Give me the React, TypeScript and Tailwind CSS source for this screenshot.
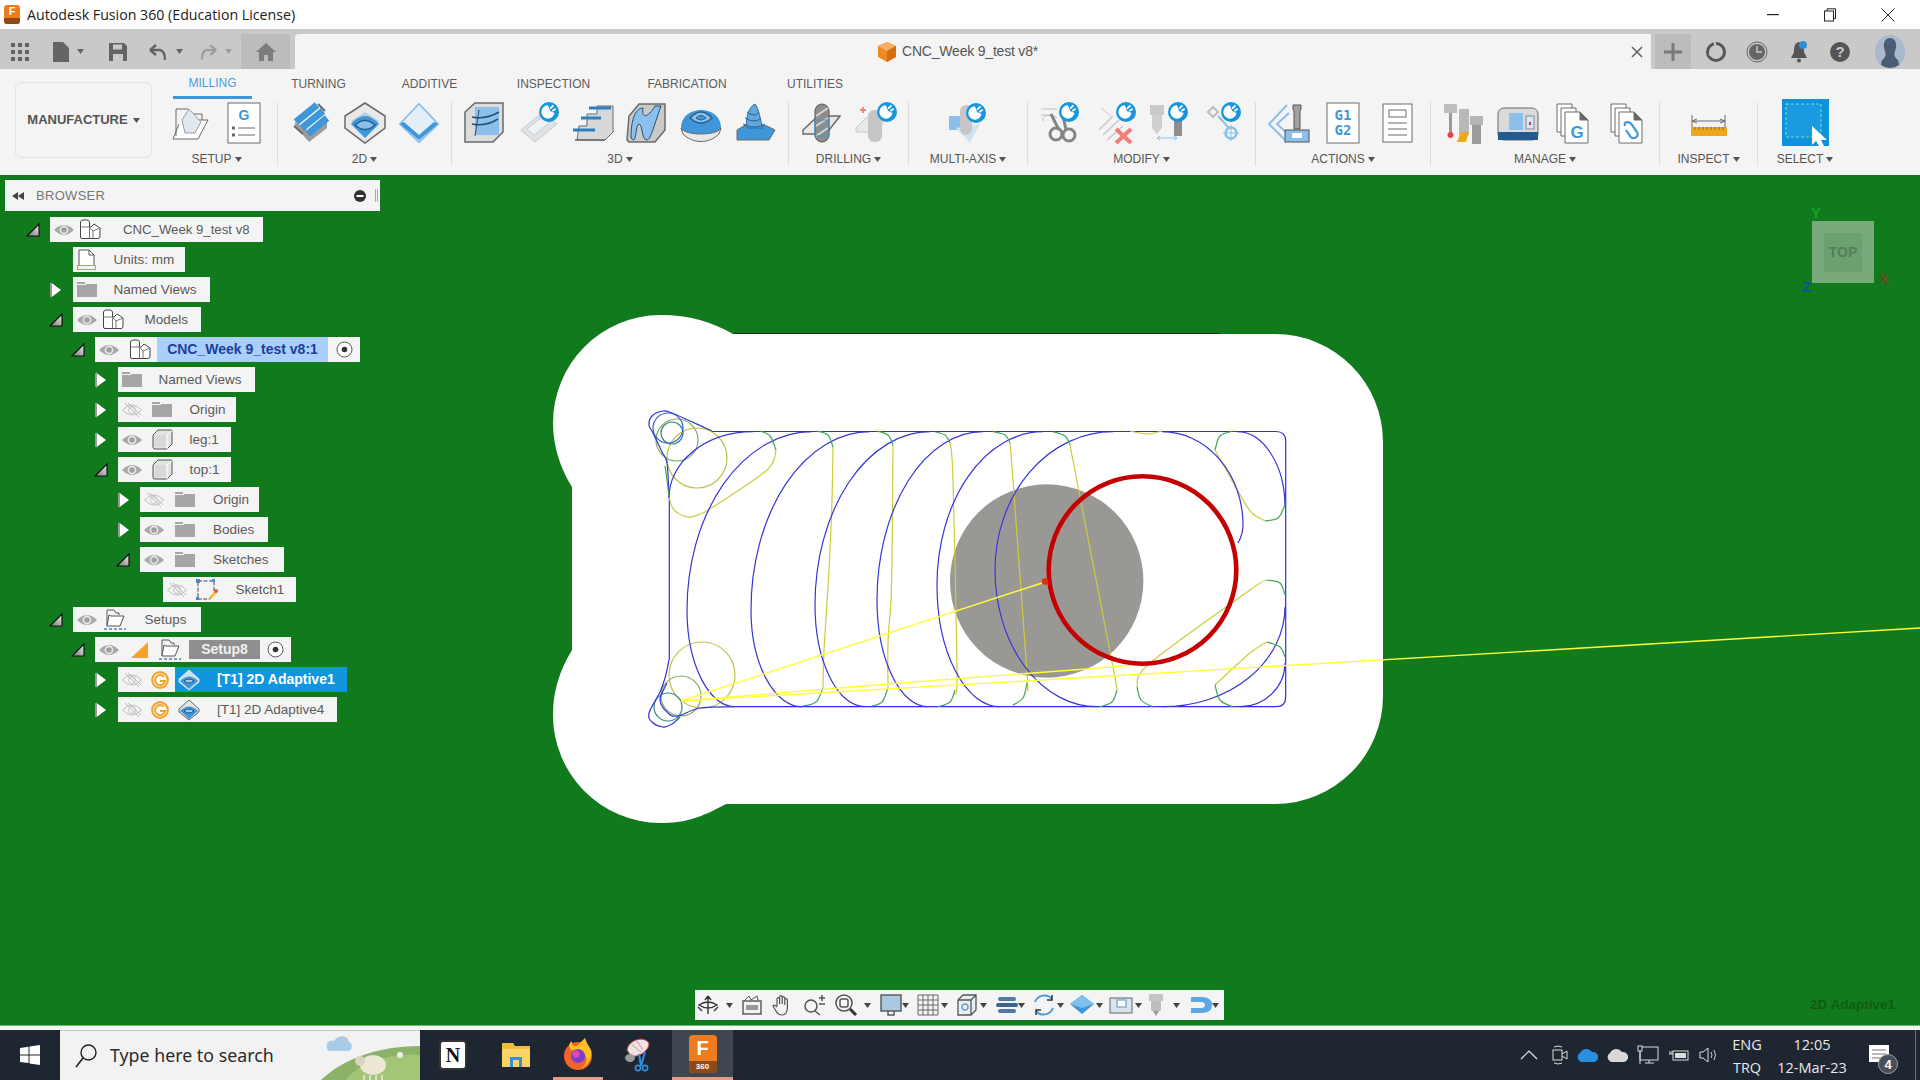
import React from "react";

const B = "#3f97d9", L = "#8cc0ea", G = "#6a6a6a";

function smooth(p: number[][]) {
  let d = `M${p[0][0]} ${p[0][1]}`;
  for (let i = 0; i < p.length - 1; i++) {
    const a = p[Math.max(i - 1, 0)], b = p[i], c = p[i + 1], e = p[Math.min(i + 2, p.length - 1)];
    d += ` C${b[0] + (c[0] - a[0]) / 6} ${b[1] + (c[1] - a[1]) / 6} ${c[0] - (e[0] - b[0]) / 6} ${c[1] - (e[1] - b[1]) / 6} ${c[0]} ${c[1]}`;
  }
  return d;
}

const T0 = 431.7, B0 = 706.7;
const sweeps: number[][] = [
  [812, 687, 735, 610],
  [870, 751, 802, 610],
  [930, 815, 865, 605],
  [983, 877, 928, 600],
  [1043, 937, 1000, 585],
  [1113, 995, 1097, 570],
];
const blueArcs: string[] = [
  ...sweeps.map(([t, l, b, y]) => `M${t} ${T0} A${t - l} ${y - T0} 0 0 0 ${l} ${y} A${b - l} ${B0 - y} 0 0 0 ${b} ${B0}`),
  `M753 ${T0} A84 66 0 0 0 669 497.7`,
  `M1162 ${T0} A81 93 0 0 1 1243 525 Q1243 534 1238 543`,
  `M1285 607 A122 100 0 0 1 1163 ${B0}`,
  `M1237 ${T0} A48 75 0 0 1 1285 507`,
  `M1285 663 A45 44 0 0 1 1240 ${B0}`,
];
const blue: number[][][] = [
  [[712, 431], [690, 421], [672, 413], [663, 411], [652, 416], [649, 425], [653, 433], [662, 452], [667, 463], [669, 497]],
  [[667, 683], [660, 700], [668, 713], [678, 716], [700, 708], [735, 706.7]],
  [[669, 660], [665, 678], [660, 692], [649, 713], [652, 722], [663, 727], [672, 724], [680, 717]],
];
const green: number[][][] = [
  [[760, 431], [770, 436], [776, 450]],
  [[817, 431], [828, 435], [833, 447]],
  [[877, 431], [888, 435], [893, 445]],
  [[935, 431.7], [945, 435], [950, 443]],
  [[993, 431.7], [1005, 435], [1010, 443]],
  [[1053, 431.7], [1065, 436], [1070, 445]],
  [[1233, 431], [1220, 436], [1215, 450]],
  [[1265, 521], [1278, 518], [1285, 505]],
  [[803, 706], [816, 702], [823, 688]],
  [[872, 706], [882, 702], [888, 688]],
  [[938, 706.7], [950, 702], [955, 690]],
  [[1013, 705], [1023, 698], [1027, 683]],
  [[1100, 706.7], [1112, 702], [1117, 690]],
  [[1137, 687], [1141, 700], [1153, 707]],
  [[1267, 580], [1280, 583], [1285, 595]],
  [[1215, 685], [1220, 700], [1233, 707]],
  [[1285, 657], [1280, 647], [1267, 642]],
  [[669, 497], [667, 480], [665, 466]],
];
const olive: number[][][] = [
  [[669, 497], [674, 510], [688, 517], [700, 514], [713, 507], [767, 470], [776, 450]],
  [[833, 447], [832, 500], [829, 570], [824, 650], [823, 688]],
  [[893, 445], [892, 560], [891, 600], [888, 643], [888, 688]],
  [[950, 443], [953, 480], [957, 667], [955, 695]],
  [[1010, 443], [1013, 480], [1027, 673], [1027, 683]],
  [[1070, 445], [1080, 497], [1113, 667], [1117, 690]],
  [[1130, 431], [1147, 434], [1162, 431]],
  [[1215, 450], [1243, 500], [1252, 513], [1265, 521]],
  [[1137, 687], [1150, 663], [1250, 590], [1267, 580]],
  [[1267, 642], [1250, 653], [1215, 685]],
];

function Drawing() {
  return (
    <svg width="1920" height="850" viewBox="0 175 1920 850" className="absolute inset-0">
      <path d="M733 334 L1275 334 A108 108 0 0 1 1383 442 L1383 696 A108 108 0 0 1 1275 804 L726 804 C700 818 685 823 660 823 A108 108 0 0 1 553 715 C553 690 560 670 572 650 L572 487 C560 468 553 445 553 423 A108 108 0 0 1 660 315 C690 315 712 322 733 334 Z" fill="#fff" />
      <line x1="733" y1="333.5" x2="1220" y2="333.5" stroke="#1d2b1d" strokeWidth="1.2" />
      <circle cx="1046.7" cy="581" r="96.7" fill="#9a9895" />
      <g fill="none" strokeWidth="1.2">
        <circle cx="697" cy="458" r="30" stroke="#bfc24a" />
        <circle cx="677" cy="440" r="21" stroke="#7cae5a" />
        <circle cx="702" cy="675" r="33" stroke="#c2c24a" />
        <circle cx="681" cy="696" r="20" stroke="#80ae5a" />
        <circle cx="672" cy="433" r="11" stroke="#3a8a80" />
        <circle cx="668" cy="428" r="15" stroke="#3a5ec8" />
        <circle cx="668" cy="707" r="14" stroke="#3a8a80" />
        <path d="M712 431.5 H1276 Q1285.7 431.5 1285.7 441 V697 Q1285.7 706.7 1276 706.7 H735" stroke="#2e2ee6" />
        <line x1="669.3" y1="497" x2="669.3" y2="660" stroke="#2e2ee6" />
        {olive.map((p, i) => <path key={i} d={smooth(p)} stroke="#cccc3c" />)}
        {blueArcs.map((d, i) => <path key={i} d={d} stroke="#3535d8" />)}
        {blue.map((p, i) => <path key={i} d={smooth(p)} stroke="#3535d8" />)}
        {green.map((p, i) => <path key={i} d={smooth(p)} stroke="#46a45c" />)}
        <polyline points="681,701 1045,582" stroke="#ffff38" strokeWidth="1.4" />
        <polyline points="681,701 1127,675 1920,628" stroke="#ffff38" strokeWidth="1.4" />
        <polyline points="681,701 900,683 1100,668 1130,665" stroke="#ffff38" strokeWidth="1.4" />
      </g>
      <circle cx="1142.5" cy="570" r="93.8" fill="none" stroke="#c40000" strokeWidth="4.6" />
      <circle cx="1045" cy="581.5" r="3.2" fill="#ee2a00" />
    </svg>
  );
}

function Plug({ x = 28, y = 10, r = 9 }: { x?: number; y?: number; r?: number }) {
  return (
    <g transform={`translate(${x} ${y}) scale(${r / 9})`}>
      <circle r="9" fill="#1796de" />
      <path d="M-1 -6 A6 6 0 1 0 5 1 L1 -1 Z" fill="#fff" />
      <path d="M1 -3 L4 -6 M3 -1 L6 -3" stroke="#fff" strokeWidth="1.6" />
    </g>
  );
}

function R({ c }: { c: React.ReactNode }) {
  return <svg width="44" height="42" viewBox="0 0 44 42" fill="none">{c}</svg>;
}

const ic: Record<string, React.ReactNode> = {
  open: <R c={<g stroke={G} strokeWidth="1"><path d="M11 22 L5 37 H30 L40 18 H14" fill="#fff" /><path d="M8 34 V7 H20 L24 12 H34 V18" fill="none" /><path d="M14 18 L21 7 L33 20 L27 31 H17 Z" fill="#dfe8ef" stroke="#9b9b9b" /></g>} />,
  gdoc: <R c={<g><rect x="6" y="1" width="32" height="40" fill="#fff" stroke={G} /><text x="22" y="18" textAnchor="middle" fontSize="14" fontWeight="700" fill={B} fontFamily="Liberation Sans">G</text><path d="M16 26 H33 M16 33 H33" stroke={G} /><rect x="10" y="24.5" width="3" height="3" fill={G} /><rect x="10" y="31.5" width="3" height="3" fill={G} /></g>} />,
  d2a: <R c={<g><path d="M6 24 L20 40 L38 26 V20 L24 32 L6 20Z" fill="#9c9c9c" /><path d="M7 20 L28 3 M13 26 L34 9 M19 32 L38 16" stroke={B} strokeWidth="7" /><path d="M5 24 L14 32 M29 2 L36 9" stroke={G} strokeWidth="2" /></g>} />,
  d2b: <R c={<g><path d="M22 1 L42 14 V26 L22 41 L2 26 V14Z" fill="#e9e9e9" stroke={G} strokeWidth="1.5" /><path d="M22 10 L36 19 L22 36 L8 19Z" fill="#b9cfe0" /><path d="M8 22 Q22 6 36 22 L22 36Z" fill={B} /><path d="M12 23 Q22 14 32 23 Q22 32 12 23Z" fill={L} stroke="#25608f" strokeWidth="1.5" /></g>} />,
  d2c: <R c={<g><path d="M22 2 L41 22 L22 40 L3 22Z" fill="#fff" stroke={L} strokeWidth="2" /><path d="M22 3 L38 20 L22 33 L6 20Z" fill="#e4eef6" /><path d="M7 20 L22 33 L37 20 L41 22 L22 38 L3 22Z" fill={B} /></g>} />,
  t3a: <R c={<g><path d="M2 10 L12 1 H40 V30 L30 40 H2Z" fill="#dcdcdc" stroke={G} strokeWidth="1.5" /><rect x="12" y="5" width="24" height="28" fill={L} /><path d="M9 15 Q22 18 36 10 M9 22 Q22 25 35 17" stroke="#244f78" strokeWidth="1.6" /><path d="M16 8 L12 34" stroke="#244f78" strokeWidth="1" /></g>} />,
  t3b: <R c={<g><path d="M4 28 L26 10 L40 22 L18 40Z" fill="#dfe2e5" stroke="#c8c8c8" /><path d="M10 27 L25 15 L32 21 L17 33Z" fill="#eef3f7" stroke="#c6d0d8" /><Plug x={32} y={10} r={10} /></g>} />,
  t3c: <R c={<g><path d="M6 38 H34 L42 30 V4 H26 V12 H16 V24 H8Z" fill="#d8d8d8" stroke={G} /><path d="M18 6 H40 M10 16 H30 M2 28 H24" stroke="#2c7fc0" strokeWidth="3" /><path d="M4 38 H34" stroke={G} strokeWidth="1.5" /></g>} />,
  t3d: <R c={<g><path d="M2 38 L4 14 L14 2 H40 V28 L30 40 H4Z" fill="#c9c9c9" stroke={G} strokeWidth="1.5" /><path d="M6 36 C6 10 14 6 18 6 C16 20 26 12 30 4 H36 C30 20 26 38 22 38 C16 38 18 22 14 22 C10 24 12 38 8 38Z" fill={L} stroke="#21507a" strokeWidth="1" /></g>} />,
  t3e: <R c={<g><path d="M2 26 C2 2 42 2 42 26 C42 38 2 38 2 26Z" fill={B} /><path d="M2 26 C6 34 38 34 42 26 L40 32 C30 42 14 42 4 32Z" fill="#e8e8e8" stroke={G} /><path d="M11 16 Q22 4 33 16 Q22 26 11 16Z" fill={L} stroke="#25608f" strokeWidth="1.5" /><path d="M17 16 Q22 11 27 16 Q22 20 17 16Z" fill="#3f97d9" stroke="#25608f" /></g>} />,
  t3f: <R c={<g><path d="M4 28 L14 22 H24 L34 24 L42 28 L36 38 H4Z" fill={B} stroke={G} /><path d="M14 26 C12 14 17 4 22 2 C26 6 27 18 30 26 H14Z" fill="#5fa7de" stroke="#2b6c9e" /><path d="M14 10 Q22 16 26 10 M12 16 Q22 22 28 16 M10 22 Q22 28 32 22" stroke="#27628f" /></g>} />,
  dr1: <R c={<g><path d="M3 28 L18 14 H40 L26 32 H3Z" fill="#e7e7e7" stroke={G} strokeWidth="1.5" /><rect x="15" y="2" width="14" height="38" rx="7" fill="#8d8d8d" stroke="#555" /><path d="M16 14 L28 6 M16 24 L28 16 M16 34 L28 26" stroke="#d4d4d4" strokeWidth="2" /><rect x="15" y="18" width="14" height="16" fill="none" stroke={B} /></g>} />,
  dr2: <R c={<g><path d="M6 8 H12 M9 5 V11" stroke="#e58a80" strokeWidth="2" /><path d="M2 26 L12 16 H32 L24 30 H2Z" fill="#e9e9e9" stroke="#c9c9c9" /><rect x="14" y="8" width="14" height="32" rx="6" fill="#c6c6c6" /><Plug x={33} y={10} r={10} /></g>} />,
  ma: <R c={<g><rect x="3" y="14" width="16" height="14" fill={L} /><path d="M10 26 L34 22 L24 41 Z" fill="#cfe2f2" /><rect x="14" y="3" width="12" height="30" rx="6" fill="#c6c6c6" /><Plug x={30} y={11} r={10} /></g>} />,
  sc: <R c={<g><path d="M2 7 H18 M2 13 H14 M4 19 C2 12 14 12 18 16" stroke="#bdbdbd" /><circle cx="17" cy="32" r="6" fill="none" stroke="#858585" strokeWidth="3" /><circle cx="30" cy="33" r="6" fill="none" stroke="#858585" strokeWidth="3" /><path d="M20 28 L12 12 M27 28 L24 14" stroke="#858585" strokeWidth="3" /><Plug x={30} y={10} r={10} /></g>} />,
  dl: <R c={<g><path d="M6 28 L20 14 M10 33 L26 18 M14 38 L30 24" stroke="#c9c9c9" strokeWidth="1.5" /><path d="M8 6 L18 14" stroke="#c9c9c9" /><path d="M23 27 L38 41 M38 27 L23 41" stroke="#ee7e78" strokeWidth="4" /><Plug x={33} y={10} r={10} /></g>} />,
  mv: <R c={<g><rect x="3" y="3" width="14" height="10" fill="#c9c9c9" /><path d="M5 13 H15 V26 L10 32 L5 26Z" fill="#cfcfcf" /><path d="M10 36 H30 M10 36 L13 34 M10 36 L13 38 M30 36 L27 34 M30 36 L27 38" stroke={L} /><rect x="27" y="18" width="8" height="16" fill="#8e8e8e" /><Plug x={31} y={10} r={10} /></g>} />,
  nd: <R c={<g><path d="M12 5 L17 10 L12 15 L7 10Z M12 5" stroke="#bcbcbc" strokeWidth="2" /><path d="M17 14 L28 26" stroke={L} strokeWidth="2" /><circle cx="30" cy="31" r="5.5" stroke={L} strokeWidth="2.5" /><path d="M30 23 V39 M22 31 H38" stroke={L} /><Plug x={30} y={10} r={10} /></g>} />,
  a1: <R c={<g><path d="M20 3 L2 22 L20 40 M22 11 L10 22 L22 33" stroke={L} strokeWidth="2" /><path d="M26 3 h8 v4 l-1 2 v18 h-6 v-18 l-1 -2Z" fill="#a0a0a0" stroke="#555" /><rect x="18" y="28" width="24" height="12" fill={L} stroke="#555" /><rect x="25" y="31" width="10" height="5" fill="#fff" /></g>} />,
  a2: <R c={<g><rect x="6" y="1" width="32" height="40" fill="#fff" stroke={G} /><text x="22" y="18" textAnchor="middle" fontSize="14" fontWeight="700" fill={B} fontFamily="DejaVu Sans Mono">G1</text><text x="22" y="33" textAnchor="middle" fontSize="14" fontWeight="700" fill={B} fontFamily="DejaVu Sans Mono">G2</text></g>} />,
  a3: <R c={<g><rect x="8" y="2" width="29" height="38" fill="#fff" stroke={G} /><rect x="14" y="8" width="17" height="7" stroke={G} /><path d="M13 21 H32 M13 27 H32 M13 33 H32" stroke={G} /></g>} />,
  m1: <R c={<g><rect x="2" y="2" width="13" height="9" fill="#bdbdbd" /><rect x="7" y="11" width="3" height="20" fill="#9a9a9a" /><circle cx="8.5" cy="33" r="3" fill="#e34747" /><rect x="17" y="7" width="10" height="26" fill="#b8b8b8" /><path d="M15 40 L19 30 H27 L24 40Z" fill="#eea820" /><rect x="28" y="14" width="13" height="9" fill="#b5b5b5" /><rect x="30" y="23" width="9" height="19" fill="#9b9b9b" /></g>} />,
  m2: <R c={<g><rect x="2" y="6" width="40" height="32" rx="6" fill="#dadada" stroke={G} /><rect x="2" y="30" width="40" height="8" fill="#255a8c" /><rect x="13" y="11" width="14" height="17" fill={L} /><rect x="30" y="14" width="8" height="13" fill="#d8e7f4" stroke="#888" /><rect x="33" y="20" width="2" height="3" fill="#c34" /></g>} />,
  m3: <R c={<g stroke={G} fill="#fff"><path d="M7 2 H22 V30 H7Z" /><path d="M11 6 H26 V34 H11Z" /><path d="M15 10 H30 L38 18 V41 H15Z" /><path d="M30 10 V18 H38" fill="#666" /><text x="27" y="36" textAnchor="middle" fontSize="17" fontWeight="700" fill={B} stroke="none" fontFamily="Liberation Sans">G</text></g>} />,
  m4: <R c={<g stroke={G} fill="#fff"><path d="M7 2 H22 V30 H7Z" /><path d="M11 6 H26 V34 H11Z" /><path d="M15 10 H30 L38 18 V41 H15Z" /><path d="M30 10 V18 H38" fill="#666" /><path d="M21 24 C19 19 26 19 28 23 L33 30 C36 36 28 38 26 34 L22 28" stroke={B} strokeWidth="2.2" fill="none" /></g>} />,
  ins: <R c={<g><path d="M5 13 V25 M38 13 V25 M5 19 H38 M5 19 L10 17 M5 19 L10 21 M38 19 L33 17 M38 19 L33 21" stroke={G} /><rect x="4" y="25" width="36" height="9" fill="#eea820" /><path d="M8 25 v3 M12 25 v3 M16 25 v3 M20 25 v3 M24 25 v3 M28 25 v3 M32 25 v3 M36 25 v3" stroke="#8a6a20" /></g>} />,
};

function Caret({ c = "#555" }: { c?: string }) {
  return <svg width="7" height="5" viewBox="0 0 7 5" className="shrink-0"><path d="M0 0 H7 L3.5 5Z" fill={c} /></svg>;
}

function Group({ w, label, items }: { w: string; label: string; items: string[] }) {
  return (
    <div className={`${w} h-[64px] mt-[2px] flex flex-col items-center border-r border-[#dedede]`}>
      <div className="flex h-[42px] justify-center">
        {items.map((k, i) => <div key={i} className="w-[54px] flex justify-center">{ic[k]}</div>)}
      </div>
      <div className="mt-[6px] h-[22px] flex items-center gap-[3px] text-[12px] text-[#565656] whitespace-nowrap">{label}<Caret /></div>
    </div>
  );
}

function Ribbon() {
  return (
    <div className="h-[106px] bg-[#f4f4f4] flex font-['Liberation_Sans',sans-serif]">
      <div className="w-[156px] pl-[15px] pt-[13px]">
        <div className="w-[137px] h-[76px] border border-[#e3e3e3] rounded-[6px] flex items-center justify-center gap-[5px] text-[13px] font-bold text-[#555]">MANUFACTURE<Caret /></div>
      </div>
      <div className="flex-1 flex flex-col">
        <div className="h-[31px] flex items-start text-[12px] text-[#5c5c5c] pl-[17px]">
          <div className="w-[79px] h-[30px] border-b-[3px] border-[#3f97d9] text-[#4a9fdc] flex items-center justify-center pt-[1px]">MILLING</div>
          <div className="w-[133px] h-[29px] flex items-center justify-center">TURNING</div>
          <div className="w-[89px] h-[29px] flex items-center justify-center">ADDITIVE</div>
          <div className="w-[159px] h-[29px] flex items-center justify-center">INSPECTION</div>
          <div className="w-[108px] h-[29px] flex items-center justify-center">FABRICATION</div>
          <div className="w-[148px] h-[29px] flex items-center justify-center">UTILITIES</div>
        </div>
        <div className="flex">
          <Group w="w-[122px]" label="SETUP" items={["open", "gdoc"]} />
          <Group w="w-[174px]" label="2D" items={["d2a", "d2b", "d2c"]} />
          <Group w="w-[337px]" label="3D" items={["t3a", "t3b", "t3c", "t3d", "t3e", "t3f"]} />
          <Group w="w-[120px]" label="DRILLING" items={["dr1", "dr2"]} />
          <Group w="w-[119px]" label="MULTI-AXIS" items={["ma"]} />
          <Group w="w-[228px]" label="MODIFY" items={["sc", "dl", "mv", "nd"]} />
          <Group w="w-[175px]" label="ACTIONS" items={["a1", "a2", "a3"]} />
          <Group w="w-[229px]" label="MANAGE" items={["m1", "m2", "m3", "m4"]} />
          <Group w="w-[98px]" label="INSPECT" items={["ins"]} />
          <div className="w-[94px] h-[64px] flex flex-col items-center">
            <div className="w-[47px] h-[47px] -mt-[1px] bg-[#0f92dc] flex items-center justify-center">
              <svg width="47" height="47" viewBox="0 0 47 47"><rect x="4" y="5" width="35" height="33" fill="#1a9ae0" stroke="#6fe0d8" strokeWidth="1" strokeDasharray="3 2" /><path d="M30 27 L45 41 L39 41 L42 47 L37 47 L34 42 L30 46Z" fill="#fff" /></svg>
            </div>
            <div className="mt-[4px] h-[22px] flex items-center gap-[3px] text-[12px] text-[#565656]">SELECT<Caret /></div>
          </div>
        </div>
      </div>
    </div>
  );
}

function TopBar() {
  const c = "#646464";
  return (
    <div className="h-[40px] bg-[#c9c9c9] flex">
      <div className="w-[295px] flex pt-[5px]">
        <div className="w-[241px] h-[35px] flex items-center">
          <svg width="18" height="18" viewBox="0 0 18 18" className="ml-[11px]"><path d="M0 0 h4 v4 h-4z M7 0 h4 v4 h-4z M14 0 h4 v4 h-4z M0 7 h4 v4 h-4z M7 7 h4 v4 h-4z M14 7 h4 v4 h-4z M0 14 h4 v4 h-4z M7 14 h4 v4 h-4z M14 14 h4 v4 h-4z" fill={c} /></svg>
          <svg width="18" height="22" viewBox="0 0 18 22" className="ml-[23px]"><path d="M1 1 H11 L17 7 V21 H1Z" fill={c} /></svg>
          <div className="ml-[7px]"><Caret c={c} /></div>
          <svg width="20" height="20" viewBox="0 0 20 20" className="ml-[24px]"><path d="M1 1 H16 L19 4 V19 H1Z" fill={c} /><rect x="5" y="2.5" width="9" height="5" fill="#c9c9c9" /><rect x="5" y="12" width="10" height="7" fill="#c9c9c9" /></svg>
          <svg width="18" height="18" viewBox="0 0 18 18" fill="none" className="ml-[21px]"><path d="M1 7 L7 2 M1 7 L7 12 M1 7 H11 Q16 8 16 17" stroke={c} strokeWidth="2.4" /></svg>
          <div className="ml-[9px]"><Caret c={c} /></div>
          <svg width="17" height="18" viewBox="0 0 18 18" fill="none" className="ml-[17px]"><path d="M17 7 L11 2 M17 7 L11 12 M17 7 H7 Q2 8 2 17" stroke="#9c9c9c" strokeWidth="2.4" /></svg>
          <div className="ml-[8px]"><Caret c="#9c9c9c" /></div>
        </div>
        <div className="w-[49px] h-[35px] bg-[#bcbcbc] rounded-t-[2px] flex items-center justify-center">
          <svg width="20" height="19" viewBox="0 0 20 19"><path d="M10 1 L20 10 H17 V19 H12 V13 H8 V19 H3 V10 H0Z" fill="#7c7c7c" /></svg>
        </div>
      </div>
      <div className="mt-[5px] w-[1356px] h-[35px] bg-[#f4f4f4] rounded-tl-[4px] flex items-center">
        <div className="w-[582px] shrink-0" />
        <svg width="20" height="22" viewBox="0 0 20 22"><path d="M10 1 L19 5 V16 L10 21 L1 16 V5Z" fill="#ee8a26" /><path d="M10 1 L19 5 L10 10 L1 5Z" fill="#f7ad62" /><path d="M10 10 L19 5 V16 L10 21Z" fill="#d66f12" /></svg>
        <div className="ml-[5px] w-[729px] shrink-0 text-[14px] text-[#555] font-['Liberation_Sans',sans-serif] tracking-[-0.2px]">CNC_Week 9_test v8*</div>
        <svg width="12" height="12" viewBox="0 0 12 12"><path d="M1 1 L11 11 M11 1 L1 11" stroke="#666" strokeWidth="1.6" /></svg>
      </div>
      <div className="flex-1 flex pt-[5px]">
        <div className="ml-[4px] w-[36px] h-[35px] bg-[#bcbcbc] flex items-center justify-center">
          <svg width="18" height="18" viewBox="0 0 18 18"><path d="M9 0 V18 M0 9 H18" stroke="#787878" strokeWidth="3" /></svg>
        </div>
        <div className="flex items-center h-[35px]">
          <svg width="22" height="22" viewBox="0 0 22 22" fill="none" className="ml-[14px]"><circle cx="11" cy="11" r="8.5" stroke="#555" strokeWidth="3" /><path d="M9 0 L12 9 L4 14" stroke="#c9c9c9" strokeWidth="2" /></svg>
          <svg width="22" height="22" viewBox="0 0 22 22" fill="none" className="ml-[19px]"><circle cx="11" cy="11" r="10" stroke="#666" /><circle cx="11" cy="11" r="8" fill="#666" /><path d="M11 5 V11 H16" stroke="#c9c9c9" strokeWidth="1.4" /></svg>
          <svg width="22" height="24" viewBox="0 0 22 24" className="ml-[20px]"><path d="M11 2 C6 3 6 8 6 12 L3 18 H19 L16 12 C16 8 16 3 11 2Z" fill="#555" /><circle cx="11" cy="20.5" r="2" fill="#555" /><circle cx="15" cy="5" r="4" fill="#2d8fd8" /></svg>
          <svg width="22" height="22" viewBox="0 0 22 22" className="ml-[19px]"><circle cx="11" cy="11" r="10" fill="#555" /><text x="11" y="16" textAnchor="middle" fontSize="15" fontWeight="700" fill="#c9c9c9" fontFamily="Liberation Sans">?</text></svg>
          <svg width="30" height="34" viewBox="0 0 30 34" className="ml-[24px]"><ellipse cx="15" cy="17" rx="15" ry="17" fill="#a9b9ce" /><path d="M15 3 C8 3 8 12 10 16 C11 20 11 22 7 25 L6 30 Q15 36 24 30 L23 25 C19 22 19 20 20 16 C22 12 22 3 15 3Z" fill="#4b5d75" /></svg>
        </div>
      </div>
    </div>
  );
}

const Eye = ({ off }: { off?: boolean }) => off ? (
  <svg width="20" height="14" viewBox="0 0 20 14" fill="none"><path d="M0.5 7 Q10 -3 19.5 7 Q10 17 0.5 7Z" stroke="#bdbdbd" /><circle cx="10" cy="7" r="3.5" stroke="#c6c6c6" /><path d="M3 0 L17 14 M6 0 L19 12" stroke="#b9b9b9" /></svg>
) : (
  <svg width="20" height="14" viewBox="0 0 20 14"><path d="M0 7 Q10 -3 20 7 Q10 17 0 7Z" fill="#a8a8a8" /><circle cx="10" cy="7" r="4.4" fill="#e9e9e9" /><circle cx="10" cy="7" r="2.8" fill="#a0a0a0" /></svg>
);
const Folder = () => <svg width="20" height="15" viewBox="0 0 20 15"><path d="M0 0 H8 V2 H20 V15 H0Z M1 3 H7" fill="#a6a6a6" /><path d="M0 2.5 H9" stroke="#f4f4f4" /></svg>;
const Comp = () => <svg width="21" height="21" viewBox="0 0 21 21" fill="none" stroke="#444"><path d="M2 19.5 Q0.5 19.5 0.5 18 V3 Q1 1 3 1 H7 Q9 1 9.5 3 V8 L11 8 L14 5 L20 9 V17 Q20 19.5 18 19.5Z" fill="#fff" /><path d="M9.5 8 L13 12 L20 9 M13 12 V19.5 M9.5 8 V19.5 M0.5 8 H9.5" stroke="#777" /></svg>;
const Body = () => <svg width="21" height="21" viewBox="0 0 21 21" fill="none"><path d="M6 1 H19 Q20 1 20 2 V15 L15 20 H3 Q1 20 1 18 V6Z" fill="#e3e3e3" stroke="#555" /><path d="M3 6 H15 V18 H3Z" fill="#d8d8d8" /><path d="M15 6 L20 2 M15 6 V20" stroke="#fff" /></svg>;
const Doc = () => <svg width="20" height="22" viewBox="0 0 20 22" fill="none"><path d="M2 17 V1 H12 L17 6 V17" stroke="#555" fill="#fff" /><path d="M12 1 V6 H17" stroke="#555" /><rect x="0.5" y="16.5" width="18" height="4" stroke="#e29a1a" fill="#f4f4f4" /></svg>;
const Radio = () => <svg width="17" height="17" viewBox="0 0 17 17"><circle cx="8.5" cy="8.5" r="7.5" fill="#fff" stroke="#555" /><circle cx="8.5" cy="8.5" r="2.8" fill="#333" /></svg>;
const Setup = () => <svg width="22" height="21" viewBox="0 0 22 21" fill="none" stroke="#555"><path d="M3 17 V1 H10 L12 4 H15 V6" /><path d="M5 6 L3 17 H16 L20 7 H7Z" fill="#fff" /><path d="M0 20 H22" stroke="#7ba0c0" strokeWidth="2" strokeDasharray="3 2" /></svg>;
const Orange = () => <svg width="18" height="18" viewBox="0 0 18 18" fill="none"><circle cx="9" cy="9" r="7.8" stroke="#f2a52b" strokeWidth="2.2" fill="#fff" /><path d="M13 6 A5 5 0 1 0 14 10 H9" stroke="#f2a52b" strokeWidth="2" /></svg>;
const Adaptive = ({ sel }: { sel?: boolean }) => <svg width="22" height="22" viewBox="0 0 22 22"><path d="M11 1 L21 10 V13 L11 21 L1 13 V10Z" fill={sel ? "#cfe0ea" : "#e4e4e4"} stroke={sel ? "#d8e6ef" : "#666"} /><path d="M2 12 Q11 3 20 12 L11 20Z" fill="#3f97d9" /><path d="M6 12 Q11 8 16 12 Q11 16 6 12Z" fill="#9cc8ea" stroke="#1f5580" /></svg>;
const Sketch = () => <svg width="22" height="22" viewBox="0 0 22 22" fill="none"><path d="M2 2 H18 V16 L14 20 H2Z" stroke="#444" strokeDasharray="4 1.5" /><rect x="0" y="0" width="4" height="4" fill="#4f86c6" /><rect x="16" y="0" width="3" height="3" fill="#4f86c6" /><rect x="0" y="18" width="3" height="3" fill="#4f86c6" /><path d="M14 19 L20 13" stroke="#f0c040" strokeWidth="3" /><circle cx="20" cy="12" r="2" fill="#e2584c" /></svg>;

const ExpDown = () => <svg width="14" height="14" viewBox="0 0 14 14"><defs><linearGradient id="ed" x1="0" y1="1" x2="1" y2="0"><stop offset="0" stopColor="#777" /><stop offset="1" stopColor="#eee" /></linearGradient></defs><path d="M1 13 L13 1 V13Z" fill="url(#ed)" stroke="#111" strokeWidth="1.2" /></svg>;
const ExpRight = () => <svg width="12" height="16" viewBox="0 0 12 16" className="ml-[1.5px]"><path d="M1 0.5 L11 8 L1 15.5Z" fill="#fff" /><path d="M1 1 V15" stroke="#999" strokeWidth="2" /></svg>;

function Row({ ml, w, exp, children }: { ml: string; w: string; exp?: "d" | "r"; children: React.ReactNode }) {
  return (
    <div className={`flex items-center h-[25px] ${ml}`}>
      <div className="w-[27px] -ml-[27px] h-[25px] flex items-center pl-[3px]">
        {exp === "d" && <ExpDown />}
        {exp === "r" && <ExpRight />}
      </div>
      <div className={`${w} h-[25px] bg-[#f4f4f4] flex items-center`}>{children}</div>
    </div>
  );
}
const Sl = ({ c, children }: { c: string; children?: React.ReactNode }) => <div className={`${c} h-[25px] flex items-center justify-center shrink-0`}>{children}</div>;
const T = ({ c, children }: { c: string; children: React.ReactNode }) => <div className={`${c} text-[13.5px] pt-[1px] text-[#5a5a5a] whitespace-nowrap`}>{children}</div>;

function Browser() {
  return (
    <div className="absolute left-[5px] top-[5px] w-[375px] font-['Liberation_Sans',sans-serif]">
      <div className="h-[31px] bg-[#f4f4f4] flex items-center">
        <svg width="12" height="8" viewBox="0 0 12 8" className="ml-[7px]"><path d="M6 0 V8 L0 4Z M12 0 V8 L6 4Z" fill="#444" /></svg>
        <div className="ml-[12px] text-[13px] text-[#777] tracking-[0.3px]">BROWSER</div>
        <svg width="12" height="12" viewBox="0 0 12 12" className="ml-[249px]"><circle cx="6" cy="6" r="6" fill="#333" /><rect x="2.5" y="5" width="7" height="2" fill="#fff" /></svg>
        <div className="ml-[9px] w-[3px] h-[13px] border-x border-[#aaa]" />
      </div>
      <div className="mt-[6px] -ml-[5px] flex flex-col gap-[5px] w-[400px]">
        <Row ml="ml-[50px]" w="w-[213px]" exp="d"><Sl c="w-[28px]"><Eye /></Sl><Sl c="w-[24px]"><Comp /></Sl><div className="ml-[21px] pt-[1px] text-[13.2px] text-[#5a5a5a] whitespace-nowrap">CNC_Week 9_test v8</div></Row>
        <Row ml="ml-[72.5px]" w="w-[112.5px]"><Sl c="w-[28px]"><Doc /></Sl><T c="ml-[13px]">Units: mm</T></Row>
        <Row ml="ml-[72.5px]" w="w-[137.5px]" exp="r"><Sl c="w-[28px]"><Folder /></Sl><T c="ml-[13px]">Named Views</T></Row>
        <Row ml="ml-[72.5px]" w="w-[128.5px]" exp="d"><Sl c="w-[28px]"><Eye /></Sl><Sl c="w-[25px]"><Comp /></Sl><T c="ml-[19px]">Models</T></Row>
        <Row ml="ml-[95px]" w="w-[265px]" exp="d"><Sl c="w-[28px]"><Eye /></Sl><Sl c="w-[34px]"><Comp /></Sl><div className="w-[171px] h-[25px] bg-[#a8d0fa] text-[14px] font-bold text-[#1c3f9c] flex items-center justify-center">CNC_Week 9_test v8:1</div><Sl c="w-[32px]"><Radio /></Sl></Row>
        <Row ml="ml-[117.5px]" w="w-[137.5px]" exp="r"><Sl c="w-[28px]"><Folder /></Sl><T c="ml-[13px]">Named Views</T></Row>
        <Row ml="ml-[117.5px]" w="w-[118.5px]" exp="r"><Sl c="w-[28px]"><Eye off /></Sl><Sl c="w-[33px]"><Folder /></Sl><T c="ml-[11px]">Origin</T></Row>
        <Row ml="ml-[117.5px]" w="w-[113.5px]" exp="r"><Sl c="w-[28px]"><Eye /></Sl><Sl c="w-[33px]"><Body /></Sl><T c="ml-[11px]">leg:1</T></Row>
        <Row ml="ml-[117.5px]" w="w-[113.5px]" exp="d"><Sl c="w-[28px]"><Eye /></Sl><Sl c="w-[33px]"><Body /></Sl><T c="ml-[11px]">top:1</T></Row>
        <Row ml="ml-[140px]" w="w-[118.5px]" exp="r"><Sl c="w-[28px]"><Eye off /></Sl><Sl c="w-[33px]"><Folder /></Sl><T c="ml-[12px]">Origin</T></Row>
        <Row ml="ml-[140px]" w="w-[128px]" exp="r"><Sl c="w-[28px]"><Eye /></Sl><Sl c="w-[33px]"><Folder /></Sl><T c="ml-[12px]">Bodies</T></Row>
        <Row ml="ml-[140px]" w="w-[144px]" exp="d"><Sl c="w-[28px]"><Eye /></Sl><Sl c="w-[33px]"><Folder /></Sl><T c="ml-[12px]">Sketches</T></Row>
        <Row ml="ml-[162.5px]" w="w-[133.5px]"><Sl c="w-[28px]"><Eye off /></Sl><Sl c="w-[33px]"><Sketch /></Sl><T c="ml-[12px]">Sketch1</T></Row>
        <Row ml="ml-[72.5px]" w="w-[128.5px]" exp="d"><Sl c="w-[28px]"><Eye /></Sl><Sl c="w-[29px]"><Setup /></Sl><T c="ml-[15px]">Setups</T></Row>
        <Row ml="ml-[95px]" w="w-[196px]" exp="d"><Sl c="w-[28px]"><Eye /></Sl><Sl c="w-[33px]"><svg width="17" height="16" viewBox="0 0 17 16"><path d="M0 16 L17 0 V16Z" fill="#f3a128" /></svg></Sl><Sl c="w-[28px]"><Setup /></Sl><div className="ml-[5px] w-[71px] h-[19px] bg-[#8f8f8f] text-[14px] font-bold text-[#f0f0f0] flex items-center justify-center">Setup8</div><Sl c="w-[31px]"><Radio /></Sl></Row>
        <Row ml="ml-[117.5px]" w="w-[229.5px]" exp="r"><Sl c="w-[28px]"><Eye off /></Sl><Sl c="w-[29.5px]"><Orange /></Sl><div className="flex-1 h-[25px] bg-[#0f96de] flex items-center"><Sl c="w-[28px]"><Adaptive sel /></Sl><div className="ml-[14px] text-[14px] font-bold text-white whitespace-nowrap">[T1] 2D Adaptive1</div></div></Row>
        <Row ml="ml-[117.5px]" w="w-[219.5px]" exp="r"><Sl c="w-[28px]"><Eye off /></Sl><Sl c="w-[29.5px]"><Orange /></Sl><Sl c="w-[28px]"><Adaptive /></Sl><T c="ml-[14px]">[T1] 2D Adaptive4</T></Row>
      </div>
    </div>
  );
}

function ViewCube() {
  return (
    <div className="absolute left-[1800px] top-[30px] w-[92px] h-[92px] font-['Liberation_Sans',sans-serif]">
      <div className="absolute left-[12px] top-[16px] w-[62px] h-[62px] bg-[#77a97a] flex items-center justify-center">
        <div className="w-[38px] h-[39px] bg-[#6ba070] flex items-center justify-center text-[14px] font-bold text-[#527f58]">TOP</div>
      </div>
      <div className="absolute left-[11px] top-[-3px] text-[15px] font-bold text-[#17a32a]">Y</div>
      <div className="absolute left-[79px] top-[63px] text-[15px] font-bold text-[#6e4a22]">X</div>
      <div className="absolute left-[2px] top-[71px] text-[15px] font-bold text-[#13509c]">Z</div>
    </div>
  );
}

const S = ({ children }: { children: React.ReactNode }) => <svg width="24" height="24" viewBox="0 0 24 24" fill="none">{children}</svg>;

function NavBar() {
  const g = "#555";
  const items: { w: string; m: string; n: React.ReactNode; caret?: boolean }[] = [
    { w: "w-[43px]", m: "ml-[6px]", caret: true, n: <S><path d="M12 3 V21 M3 12 Q12 6 21 12 Q12 18 3 12Z M12 3 L9 7 M12 3 L15 7 M2 14 L6 18 M22 14 L18 18" stroke="#333" strokeWidth="1.4" /></S> },
    { w: "w-[31px]", m: "", n: <S><rect x="4" y="8" width="18" height="13" stroke={g} strokeWidth="1.4" /><rect x="7" y="12" width="12" height="5" fill="#999" /><path d="M5 8 L10 3 L12 7 L18 3 L19 7" stroke={g} /></S> },
    { w: "w-[32px]", m: "", n: <S><path d="M7 13 V6 a1.3 1.3 0 0 1 2.6 0 V11 V4 a1.3 1.3 0 0 1 2.6 0 V11 V5 a1.3 1.3 0 0 1 2.6 0 V12 V7 a1.3 1.3 0 0 1 2.6 0 V15 Q17 22 12 22 Q8 22 6 18 L3 13 Q4 11 7 14" stroke={g} strokeWidth="1.2" /></S> },
    { w: "w-[32px]", m: "", n: <S><circle cx="9" cy="13" r="6" stroke={g} strokeWidth="1.5" /><path d="M13 18 L18 22 M17 5 H23 M20 2 V8 M17 11 H23" stroke={g} strokeWidth="1.5" /></S> },
    { w: "w-[45px]", m: "ml-[6px]", caret: true, n: <S><circle cx="10" cy="10" r="8" stroke={g} strokeWidth="1.5" /><rect x="6" y="6" width="8" height="8" rx="2" stroke={g} strokeWidth="1.5" /><path d="M16 16 L22 22" stroke="#333" strokeWidth="3" /></S> },
    { w: "w-[37px]", m: "-ml-[1px]", caret: true, n: <S><rect x="2" y="2" width="20" height="16" fill="#a9c8e2" stroke={g} strokeWidth="1.4" /><path d="M9 18 V22 H15 V18" stroke={g} strokeWidth="1.4" /></S> },
    { w: "w-[39px]", m: "ml-[1px]", caret: true, n: <S><path d="M2 2 H22 V22 H2Z M7 2 V22 M12 2 V22 M17 2 V22 M2 7 H22 M2 12 H22 M2 17 H22" stroke="#666" strokeWidth="1" /></S> },
    { w: "w-[40px]", m: "ml-[1px]", caret: true, n: <S><path d="M3 7 L8 2 H21 V17 L16 22 H3Z M3 7 H16 V22 M16 7 L21 2" stroke={g} strokeWidth="1.3" fill="#e8eef3" /><circle cx="10" cy="14" r="3" stroke="#6f9dc2" strokeWidth="1.5" /></S> },
    { w: "w-[37px]", m: "-ml-[1px]", caret: true, n: <S><rect x="3" y="4" width="18" height="4" rx="2" fill="#4d7ba5" /><rect x="1" y="10" width="22" height="4" rx="2" fill="#3e6488" /><rect x="3" y="16" width="18" height="4" rx="2" fill="#4d7ba5" /></S> },
    { w: "w-[38px]", m: "ml-[1px]", caret: true, n: <S><path d="M20 6 A10 10 0 0 0 3 9 M4 18 A10 10 0 0 0 21 15" stroke="#4f9ad8" strokeWidth="2" /><path d="M20 2 V7 H15 M4 22 V17 H9" stroke="#333" strokeWidth="1.5" /></S> },
    { w: "w-[39px]", m: "ml-[2px]", caret: true, n: <S><path d="M12 2 L24 11 L12 21 L0 11Z" fill="#3f97d9" /><path d="M12 2 L24 11 L12 15 L0 11Z" fill="#7fc0ee" /></S> },
    { w: "w-[35px]", m: "ml-[2px]", caret: true, n: <S><rect x="1" y="5" width="22" height="15" fill="#dbe4eb" stroke="#666" /><rect x="8" y="7" width="9" height="7" fill="#fff" stroke="#5b90bc" /></S> },
    { w: "w-[45px]", m: "ml-[5px]", caret: true, n: <S><rect x="5" y="1" width="14" height="7" fill="#c4c4c4" /><rect x="7" y="8" width="10" height="10" fill="#bdbdbd" /><path d="M9 18 L15 18 L12 23Z" fill="#999" /></S> },
    { w: "w-[35px]", m: "-ml-[1px]", caret: true, n: <S><path d="M2 4 H12 Q23 4 23 12 Q23 20 12 20 H2 V15 H12 Q16 15 16 12 Q16 9 12 9 H2Z" fill="#58a8e4" /></S> },
  ];
  return (
    <div className="absolute left-[695px] top-[815px] w-[529px] h-[30px] bg-[#f4f4f4] flex items-center pl-[1px]">
      {items.map((it, i) => (
        <div key={i} className={`${it.w} flex items-center shrink-0`}>
          {it.n}
          {it.caret && <div className={it.m}><Caret c="#444" /></div>}
        </div>
      ))}
    </div>
  );
}

function Taskbar() {
  return (
    <div className="h-[50px] bg-[#1e2632] flex font-['Open_Sans',sans-serif] text-[#e8e8e8]">
      <div className="w-[60px] flex items-center justify-center">
        <svg width="20" height="20" viewBox="0 0 20 20"><path d="M0 3 L8.5 1.8 V9.4 H0Z M9.5 1.6 L20 0 V9.4 H9.5Z M0 10.4 H8.5 V18 L0 16.9Z M9.5 10.4 H20 V20 L9.5 18.4Z" fill="#fff" /></svg>
      </div>
      <div className="w-[360px] bg-[#f2f2f2] border-t border-[#c9c3d6] relative flex items-center overflow-hidden">
        <svg width="24" height="26" viewBox="0 0 24 26" fill="none" className="ml-[14px]"><circle cx="14.5" cy="9.5" r="7.5" stroke="#222" strokeWidth="1.4" /><path d="M9 15 L2 24" stroke="#222" strokeWidth="1.6" /></svg>
        <div className="ml-[12px] text-[17.8px] text-[#2a2a2a] font-['Noto_Sans',sans-serif]">Type here to search</div>
        <svg width="100" height="50" viewBox="0 0 100 50" className="absolute right-0 top-0">
          <path d="M8 20 C4 12 10 8 14 10 C18 3 28 4 29 11 C33 11 33 20 28 20Z" fill="#a8cce6" />
          <path d="M0 50 C20 30 55 15 100 15 V50Z" fill="#8cb26a" />
          <path d="M25 50 C40 30 70 22 100 24 V50Z" fill="#a3c676" />
          <ellipse cx="53" cy="34" rx="13" ry="10" fill="#ece8d4" />
          <path d="M44 44 V50 M50 44 V50 M56 44 V50 M62 44 V50" stroke="#e0dcc8" strokeWidth="2" />
          <circle cx="40" cy="30" r="5" fill="#d8d4c0" />
          <circle cx="80" cy="24" r="3" fill="#eee" />
        </svg>
      </div>
      <div className="flex">
        <div className="w-[66px] flex items-center justify-center">
          <div className="w-[28px] h-[30px] bg-white border-2 border-[#333] rounded-[4px] flex items-center justify-center text-[#111] font-bold text-[20px] font-['Liberation_Serif',serif]">N</div>
        </div>
        <div className="w-[60px] flex items-center justify-center">
          <svg width="28" height="28" viewBox="0 0 28 28"><path d="M0 2 H11 L13 5 H28 V26 H0Z" fill="#f0bc3c" /><rect x="0" y="8" width="28" height="18" fill="#f8d565" /><path d="M8 26 V16 H20 V26 H17 V19 H11 V26Z" fill="#3a8fd8" /></svg>
        </div>
        <div className="w-[50px] h-[50px] ml-[7px] border-b-[3px] border-[#e59a8a] flex items-center justify-center">
          <svg width="30" height="32" viewBox="0 0 30 32"><circle cx="15" cy="18" r="14" fill="#f3642a" /><path d="M8 12 Q4 6 9 3 Q8 9 14 8 Q20 2 22 0 Q24 6 28 12 Q30 24 18 31 Q28 22 20 14 Z" fill="#ffc022" /><circle cx="15" cy="18" r="7" fill="#7a3fd0" /><circle cx="13" cy="16" r="3.5" fill="#e24c9f" /></svg>
        </div>
        <div className="w-[69px] flex items-center justify-center">
          <svg width="30" height="34" viewBox="0 0 30 34" fill="none"><path d="M4 12 C6 0 24 -2 26 6 C26 12 16 20 8 18 Z" fill="#f0e2e4" stroke="#c44" strokeWidth="1" /><path d="M8 6 L18 14 M14 3 L20 12" stroke="#c99" /><ellipse cx="7" cy="20" rx="5" ry="4" fill="#9b9b9b" /><path d="M16 16 L18 28 M22 14 L18 28" stroke="#2f8fd8" strokeWidth="2" /><circle cx="15" cy="30" r="2.6" stroke="#2f8fd8" strokeWidth="1.6" /><circle cx="22" cy="30" r="2.6" stroke="#2f8fd8" strokeWidth="1.6" /></svg>
        </div>
        <div className="w-[61px] bg-[#3e4650] border-b-[3px] border-[#e59a8a] flex items-center justify-center">
          <div className="w-[28px] h-[38px] rounded-[4px] bg-[#ee7b1e] flex flex-col items-center overflow-hidden font-['Liberation_Sans',sans-serif]">
            <div className="text-[20px] font-bold text-white leading-[26px]">F</div>
            <div className="w-full flex-1 bg-[#8c4a1c] text-[8px] font-bold text-white text-center leading-[12px]">360</div>
          </div>
        </div>
      </div>
      <div className="flex-1 flex items-center relative">
        <svg width="18" height="10" viewBox="0 0 18 10" fill="none" className="ml-[787px]"><path d="M1 9 L9 1 L17 9" stroke="#e8e8e8" strokeWidth="1.2" /></svg>
        <svg width="16" height="20" viewBox="0 0 16 20" fill="none" className="ml-[14px]"><rect x="1" y="5" width="9" height="10" stroke="#ddd" /><path d="M10 9 L15 6 V14 L10 11" stroke="#ddd" /><path d="M2 2 Q6 0 10 2 M2 18 Q6 20 10 18" stroke="#ddd" /></svg>
        <svg width="22" height="14" viewBox="0 0 22 14" className="ml-[8px]"><path d="M5 14 A5 5 0 0 1 4 5 A7 7 0 0 1 16 4 A5 5 0 0 1 18 14Z" fill="#2a8fe0" /></svg>
        <svg width="22" height="14" viewBox="0 0 22 14" className="ml-[8px]"><path d="M5 14 A5 5 0 0 1 4 5 A7 7 0 0 1 16 4 A5 5 0 0 1 18 14Z" fill="#d8d8d8" /></svg>
        <svg width="22" height="20" viewBox="0 0 22 20" fill="none" className="ml-[9px]"><rect x="3" y="2" width="18" height="13" stroke="#ddd" /><path d="M8 18 H17 M12 15 V18 M3 2 V19" stroke="#ddd" /><rect x="1" y="1" width="4" height="5" fill="#1e2632" stroke="#ddd" /></svg>
        <svg width="20" height="14" viewBox="0 0 20 14" fill="none" className="ml-[10px]"><rect x="4" y="3" width="15" height="9" stroke="#ddd" /><rect x="6" y="5" width="11" height="5" fill="#ddd" /><path d="M0 6 H4 M1 3 V6 M3 3 V6" stroke="#ddd" /></svg>
        <svg width="20" height="16" viewBox="0 0 20 16" fill="none" className="ml-[10px]"><path d="M1 5 H4 L9 1 V15 L4 11 H1Z" stroke="#ddd" /><path d="M12 5 Q14 8 12 11 M15 3 Q18 8 15 13" stroke="#ccc" /></svg>
        <div className="absolute left-[984px] top-[3px] w-[60px] text-center text-[14.5px] leading-[23px]"><div>ENG</div><div>TRQ</div></div>
        <div className="absolute left-[1029px] top-[3px] w-[100px] text-center text-[14.5px] leading-[23px]"><div>12:05</div><div>12-Mar-23</div></div>
        <svg width="21" height="18" viewBox="0 0 21 18" className="absolute left-[1136px] top-[15px]"><path d="M0 0 H20 V17 H0Z" fill="#fff" /><path d="M3 5 H17 M3 9 H17 M3 13 H13" stroke="#777" strokeWidth="1.2" /></svg>
        <div className="absolute left-[1145px] top-[24px] w-[20px] h-[20px] rounded-full bg-[#4a4f57] border border-[#9a9a9a] text-[13px] font-bold text-white flex items-center justify-center leading-none font-['Liberation_Sans',sans-serif]">4</div>
        <div className="absolute left-[1182px] top-0 w-px h-[50px] bg-[#6a7078]" />
      </div>
    </div>
  );
}

export default function App() {
  return (
    <div className="w-[1920px] h-[1080px] overflow-hidden flex flex-col bg-white font-['Liberation_Sans',sans-serif]">
      <div className="h-[29px] bg-white flex items-center relative">
        <div className="ml-[4px] w-[16px] h-[19px] rounded-[3px] bg-[#ee7b1e] flex flex-col items-center overflow-hidden">
          <div className="text-[11px] font-bold text-white leading-[13px]">F</div>
          <div className="w-full flex-1 bg-[#8c4a1c]" />
        </div>
        <div className="ml-[7px] text-[14.2px] text-[#222] font-['Open_Sans',sans-serif] whitespace-nowrap">Autodesk Fusion 360 (Education License)</div>
        <div className="flex-1" />
        <svg width="12" height="2" viewBox="0 0 12 2"><rect width="12" height="1.2" fill="#222" /></svg>
        <svg width="12" height="14" viewBox="0 0 12 14" fill="none" className="ml-[45px]"><rect x="0.5" y="3" width="9" height="10" stroke="#222" /><path d="M3 3 V0.8 H11.5 V10.5 H9.5" stroke="#222" /></svg>
        <svg width="14" height="14" viewBox="0 0 14 14" fill="none" className="ml-[45px] mr-[25px]"><path d="M0.5 0.5 L13.5 13.5 M13.5 0.5 L0.5 13.5" stroke="#222" /></svg>
      </div>
      <TopBar />
      <Ribbon />
      <div className="h-[850px] relative bg-[#117a1c] overflow-hidden">
        <Drawing />
        <ViewCube />
        <Browser />
        <NavBar />
        <div className="absolute left-[1810px] top-[820px] text-[13.5px] font-bold text-[#0e5a14]">2D Adaptive1</div>
      </div>
      <div className="h-[5px] bg-[#f4f7f4] border-t border-[#6fb878]" />
      <Taskbar />
    </div>
  );
}
